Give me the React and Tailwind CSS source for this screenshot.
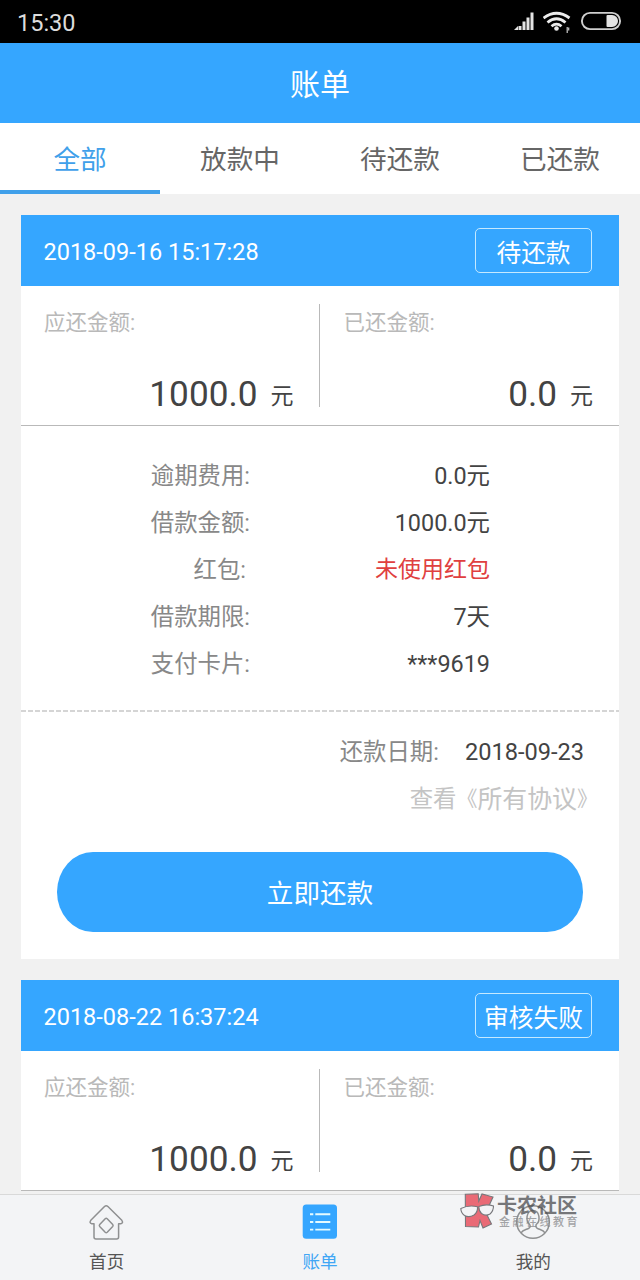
import React, { useState } from "react";

const tabs = ["全部", "放款中", "待还款", "已还款"];

const bills = [
  {
    time: "2018-09-16 15:17:28",
    status: "待还款",
    due: "1000.0",
    paid: "0.0",
    rows: [
      { label: "逾期费用:", value: "0.0元" },
      { label: "借款金额:", value: "1000.0元" },
      { label: "红包:", value: "未使用红包", red: true },
      { label: "借款期限:", value: "7天" },
      { label: "支付卡片:", value: "***9619" },
    ],
    repayDate: "2018-09-23",
  },
  {
    time: "2018-08-22 16:37:24",
    status: "审核失败",
    due: "1000.0",
    paid: "0.0",
  },
];

const StatusBar = () => (
  <div className="flex h-[43px] shrink-0 items-center justify-between bg-black pr-[18px] pl-[17px]">
    <span className="mt-[4px] font-[Roboto] text-[23.5px] leading-none text-[#dcdcdc]">
      15:30
    </span>
    <div className="flex h-[43px] items-start pt-[11px]">
      <svg width="22" height="20" viewBox="0 0 22 20" fill="#e4e4e4">
        <path d="M0 19l4-4v4zM4.500 15h3v4h-3zM8.500 10.500h3v8.500h-3zM12.500 6.500h3v12.500h-3zM16.500 1.500h3v17.500h-3z" />
      </svg>
      <svg
        className="ml-[7px]"
        width="29"
        height="23"
        viewBox="0 0 29 23"
        fill="none"
        stroke="#ececec"
        strokeWidth="2.8"
      >
        <path d="M.5 7Q13.500 -2.500 26.500 7M4.500 11.500Q13.500 4 22.500 11.500M8.500 15.200Q13.500 11 18.500 15.200" />
        <circle cx="13.500" cy="17.500" r="2.300" fill="#ececec" stroke="none" />
        <path d="M24.200 16v6M25.700 16.500v3" strokeWidth="1.200" stroke="#ccc" />
      </svg>
      <svg className="ml-[8px]" width="42" height="20" viewBox="0 0 42 20">
        <rect
          x="1.900"
          y="1.900"
          width="38.200"
          height="16.200"
          rx="8.100"
          fill="none"
          stroke="#cfcfcf"
          strokeWidth="1.900"
        />
        <path
          d="M27.500 4h4.500a6 6 0 0 1 0 12H27.500a1 1 0 0 1-1-1V5a1 1 0 0 1 1-1z"
          fill="#e4e4e4"
        />
      </svg>
    </div>
  </div>
);

const Amount = ({ label, value, className }) => (
  <div className={`flex h-[103px] flex-1 flex-col ${className}`}>
    <span className="mt-[5px] text-[21.5px] leading-[28px] text-[#b9b9b9]">
      {label}
    </span>
    <div className="mt-[42px] flex items-baseline justify-end leading-[30px] text-[#434343]">
      <span className="text-[35.2px]">{value}</span>
      <span className="relative top-[-2px] ml-[13px] text-[23px]">元</span>
    </div>
  </div>
);

const BillCard = ({ bill }) => (
  <div className="mx-[21px] mb-[21px] shrink-0 bg-white">
    <div className="flex h-[71px] items-center justify-between bg-[#35a6ff] pr-[27px] pl-[22.5px] text-white">
      <span className="mt-[2px] text-[23.5px] leading-[30px]">{bill.time}</span>
      <div className="flex h-[45px] w-[117px] items-center justify-center rounded-[5px] border border-[#c5e9ff] pt-[6px] text-[24.7px] leading-[30px]">
        {bill.status}
      </div>
    </div>
    <div className="flex h-[140px] border-b border-[#b9b9b9] pt-[18px]">
      <Amount
        label="应还金额:"
        value={bill.due}
        className="border-r border-[#b9b9b9] pr-[25px] pl-[23px]"
      />
      <Amount label="已还金额:" value={bill.paid} className="pr-[26px] pl-[24px]" />
    </div>
    {bill.rows && (
      <>
        <div className="flex h-[284px] flex-col pt-[26px] pr-[129px] pl-[129px] text-[23.4px]">
          {bill.rows.map((row) => (
            <div
              key={row.label}
              className="flex h-[47px] items-center justify-between leading-[30px]"
            >
              <span
                className={`w-[100px] text-right text-[#888] ${
                  row.red ? "pr-[4px]" : ""
                }`}
              >
                {row.label}
              </span>
              <span
                className={
                  row.red ? "text-[23px] text-[#e04040]" : "text-[#434343]"
                }
              >
                {row.value}
              </span>
            </div>
          ))}
        </div>
        <div className="h-[2px] bg-[repeating-linear-gradient(90deg,#d5d5d5_0_5px,transparent_5px_7px)]" />
        <div className="flex flex-col items-end pt-[17px] text-[23.4px] leading-[47px]">
          <div className="flex pr-[35px]">
            <span className="text-[#888]">还款日期:</span>
            <span className="ml-[26px] text-[23.6px] text-[#434343]">
              {bill.repayDate}
            </span>
          </div>
          <div className="flex pr-[21px] text-[#c4c4c4]">
            <span>查看</span>
            <span className="text-[21px]">《</span>
            <span className="text-[24.9px]">所有协议</span>
            <span className="text-[21px]">》</span>
          </div>
        </div>
        <div className="px-[36px] pt-[29px] pb-[27px]">
          <button className="block h-[80px] w-full rounded-[36px/40px] bg-[#35a6ff] pt-[4px] text-[26.6px] text-white">
            立即还款
          </button>
        </div>
      </>
    )}
  </div>
);

const HomeIcon = () => (
  <svg width="36" height="36" viewBox="0 0 36 36" fill="none" stroke="#8f9091" strokeWidth="1.500" strokeLinejoin="round">
    <path d="M15.500 2.500Q17.200 .9 18.900 2.500L32.800 16.300Q34.600 19 31.800 19.700H29.600V33Q29.600 35 27.600 35H7Q5 35 5 33V19.700H2.800Q0 19 1.800 16.300Z" />
    <path d="M16.200 14.700Q17.200 13.800 18.200 14.700L23.700 20.500Q24.500 21.500 23.700 22.500L18.200 28.300Q17.200 29.200 16.200 28.300L10.700 22.500Q9.900 21.500 10.700 20.500Z" />
  </svg>
);

const BillIcon = () => (
  <svg width="36" height="36" viewBox="0 0 36 36">
    <rect x=".7" y=".5" width="34.300" height="34.300" rx="3.500" fill="#35a6ff" />
    <path
      d="M8 10.300h3.300M13.300 10.300h15M8 18h3.300M13.300 18h15M8 25.600h3.300M13.300 25.600h15"
      stroke="#e6fbff"
      strokeWidth="1.900"
    />
  </svg>
);

const UserIcon = () => (
  <svg width="36" height="36" viewBox="0 0 36 36" fill="none" stroke="#8f9091" strokeWidth="1.500">
    <circle cx="18" cy="18" r="16.300" />
    <path d="M14.800 20.500C10.500 17.500 10.800 6.500 18 6.500S25.500 17.500 21.200 20.500C20.500 22.500 21 24 23 24.700C26.500 26 28.500 26.300 30 28.800M14.800 20.500C15.500 22.500 15 24 13 24.700C9.500 26 7.500 26.300 6 28.800" />
  </svg>
);

const nav = [
  { label: "首页", Icon: HomeIcon },
  { label: "账单", Icon: BillIcon },
  { label: "我的", Icon: UserIcon },
];

const Watermark = () => (
  <div className="pointer-events-none absolute top-[-3px] left-[460px] flex">
    <svg width="36" height="38" viewBox="0 0 36 38" stroke="#77777b" strokeWidth="1.100">
      <path
        d="M5.300 2.300L18.200 1.800L18.800 9L22 2L33 5L27.500 17L26.500 22L31.500 32L23 36L20 28.500L18.500 35L5.500 34.500Z"
        fill="#e96a76"
      />
      <path
        d="M.8 16.500Q9 12.500 17.500 14.800Q18 20 14 23Q9 26 4.500 23.500Q1 21 .8 16.500ZM18.800 14.500Q26 11.500 33.500 14Q33.500 19 30 22Q25.500 24.500 21.500 21.500Q18.800 19 18.800 14.500Z"
        fill="#f3f4f6"
      />
    </svg>
    <div className="ml-[1px] flex flex-col whitespace-nowrap opacity-75">
      <span className="mt-[3px] text-[20px] leading-[22px] font-bold text-[#4c4d50]">
        卡农社区
      </span>
      <span className="ml-[2px] text-[11px] leading-[11px] font-medium tracking-[2.500px] text-[#88898c]">
        金融在线教育
      </span>
    </div>
  </div>
);

const App = () => {
  const [tab, setTab] = useState(0);
  const [page, setPage] = useState(1);

  return (
    <div className="flex h-[1280px] w-[640px] flex-col overflow-hidden bg-[#f1f1f1] font-[Roboto,'Noto_Sans_CJK_SC',sans-serif]">
      <StatusBar />
      <header className="flex h-[80px] shrink-0 items-center justify-center bg-[#35a6ff] pt-[4px] text-[30px] leading-[40px] text-white">
        账单
      </header>
      <div className="grid h-[71px] shrink-0 grid-cols-4 bg-white text-[26.6px]">
        {tabs.map((name, i) => (
          <button
            key={name}
            onClick={() => setTab(i)}
            className={
              i === tab
                ? "border-b-4 border-[#40a0ea] pt-[7px] text-[#40a0ea]"
                : "border-b-4 border-transparent pt-[7px] text-[#666]"
            }
          >
            {name}
          </button>
        ))}
      </div>
      <main className="flex min-h-0 flex-1 flex-col overflow-hidden pt-[21px]">
        {bills.map((bill) => (
          <BillCard key={bill.time} bill={bill} />
        ))}
      </main>
      <nav className="relative grid h-[86px] shrink-0 grid-cols-3 border-t border-[#d9d9d9] bg-[#f3f4f6]">
        {nav.map(({ label, Icon }, i) => (
          <button
            key={label}
            onClick={() => setPage(i)}
            className={`flex flex-col items-center pt-[9px] text-[17.600px] leading-[24px] ${
              i === page ? "text-[#40a6f5]" : "text-[#555]"
            }`}
          >
            <Icon />
            <span className="mt-[10px]">{label}</span>
          </button>
        ))}
        <Watermark />
      </nav>
    </div>
  );
};

export default App;
